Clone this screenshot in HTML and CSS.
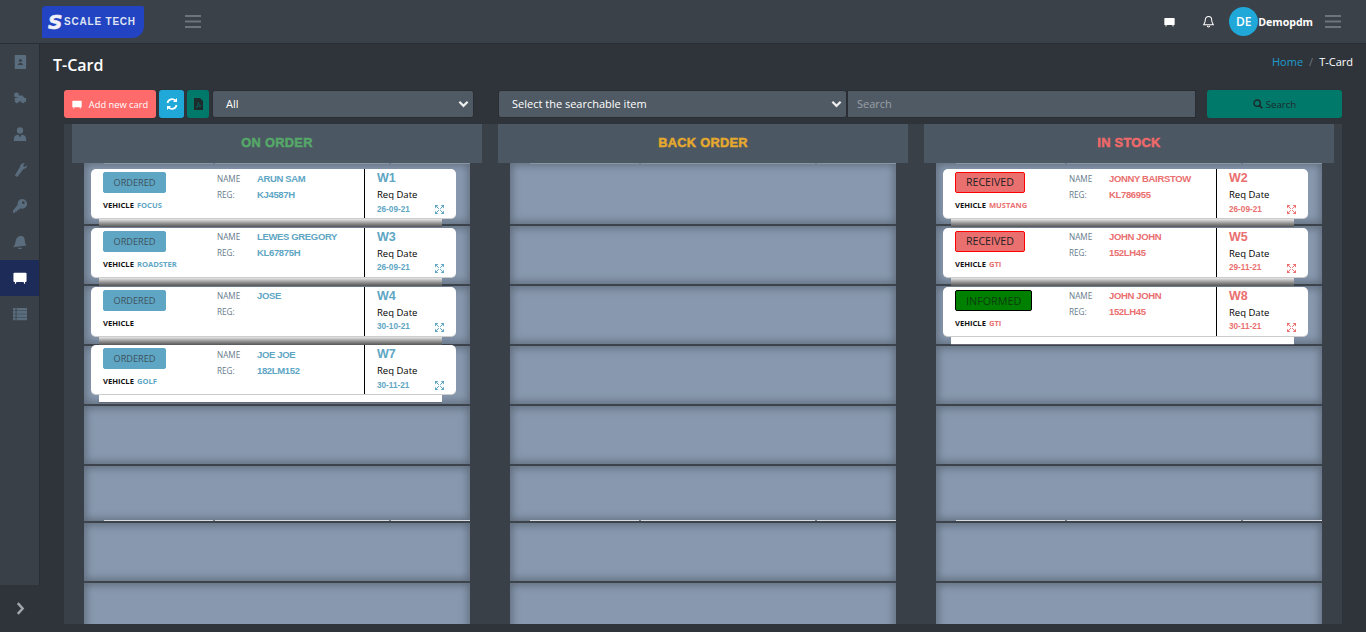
FILE: index.html
```html
<!DOCTYPE html>
<html>
<head>
<meta charset="utf-8">
<title>T-Card</title>
<link rel="stylesheet" href="styles.css">
</head>
<body>
<svg class="defs" width="0" height="0">
  <symbol id="i-board" viewBox="0 0 16 14"><path d="M1.500 1h13a1 1 0 0 1 1 1v8.500a1 1 0 0 1-1 1H13.600l.4 2h-1.400l-.4-2H3.800l-.4 2H2l.4-2H1.500a1 1 0 0 1-1-1V2a1 1 0 0 1 1-1z"/></symbol>
  <symbol id="i-expand" viewBox="0 0 12 12"><path d="M0 0h4.500L0 4.500zM12 0v4.500L7.500 0zM0 12V7.500L4.500 12zM12 12H7.500L12 7.500z"/><path d="M2 2l3.200 3.200M10 2L6.800 5.200M2 10l3.200-3.200M10 10L6.800 6.800" fill="none" stroke="currentColor" stroke-width="1.300"/></symbol>
  <symbol id="i-menu" viewBox="0 0 16 13"><path d="M0 0h16v2H0zM0 5.500h16v2H0zM0 11h16v2H0z"/></symbol>
  <symbol id="i-chev" viewBox="0 0 12 8"><path d="M1.500 1.500 6 6l4.500-4.500" fill="none" stroke="currentColor" stroke-width="2.400"/></symbol>
</svg>

<header class="topbar">
  <div class="logo"><span class="logo-s">S</span><span class="logo-text">SCALE TECH</span></div>
  <svg class="burger"><use href="#i-menu"/></svg>
  <div class="top-right">
    <svg class="top-board"><use href="#i-board"/></svg>
    <svg class="top-bell" viewBox="0 0 14 16"><path d="M7 1.500a4 4 0 0 1 4 4c0 3.500 1 5 2 6.500H1c1-1.500 2-3 2-6.500a4 4 0 0 1 4-4zM5.500 13.500a1.500 1.500 0 0 0 3 0" fill="none" stroke="#fff" stroke-width="1.300"/></svg>
    <span class="avatar">DE</span>
    <span class="user">Demopdm</span>
    <svg class="burger burger-right"><use href="#i-menu"/></svg>
  </div>
</header>

<div class="wrap">
  <nav class="sidebar">
    <a class="nav-item"><svg viewBox="0 0 14 16"><path d="M1 0h12a1 1 0 0 1 1 1v14a1 1 0 0 1-1 1H1zM7.500 4.500a1.800 1.800 0 1 0 0 3.600 1.800 1.800 0 0 0 0-3.600zM4.500 11.500h6c0-3-6-3-6 0z" fill-rule="evenodd"/></svg></a>
    <a class="nav-item"><svg viewBox="0 0 16 14"><circle cx="4" cy="3.500" r="2.800"/><path d="M5 4h6l2 3h2v4h-1.500a2 2 0 0 1-4 0H6.500a2 2 0 0 1-4 0H2V7h3z"/></svg></a>
    <a class="nav-item"><svg viewBox="0 0 16 16"><circle cx="8" cy="4" r="3.600"/><path d="M1 16v-2.500C1 10.500 3.500 8.800 6 8.600L8 12l2-3.400c2.500.2 5 1.900 5 4.900V16z"/></svg></a>
    <a class="nav-item"><svg viewBox="0 0 16 16"><path d="M13.500 0l-1.800 2.700.7 1.500 1.600.1L16 2.200c.4 2-.8 4.300-3.300 4.500l-.7.100-6.800 8.600c-.8.900-3.400-.7-2.800-1.800l5.500-9.100C7.800 2 10.800-.4 13.500 0z"/></svg></a>
    <a class="nav-item"><svg viewBox="0 0 16 16"><path d="M10.500 0a5.500 5.500 0 1 1-2 10.600L7 12.200H5v2H3L1.500 16H0v-3l5.400-6.400A5.500 5.500 0 0 1 10.500 0zm1.300 2.700a1.500 1.500 0 1 0 0 3 1.500 1.500 0 0 0 0-3z" fill-rule="evenodd"/></svg></a>
    <a class="nav-item"><svg viewBox="0 0 16 16"><path d="M9 1c3 0 4.500 2.300 4.500 5 0 3 .8 4.500 2 6L0 14c1.500-1.500 2.200-3 2.700-5.500C3.300 4 5.500 1 9 1zM6 14.500h4a2 2 0 0 1-4 .5z"/></svg></a>
    <a class="nav-item active"><svg viewBox="0 0 16 14"><use href="#i-board"/></svg></a>
    <a class="nav-item"><svg viewBox="0 0 16 14"><path d="M0 0h3v3H0zM4 0h12v3H4zM0 3.700h3v3H0zM4 3.700h12v3H4zM0 7.400h3v3H0zM4 7.400h12v3H4zM0 11h3v3H0zM4 11h12v3H4z"/></svg></a>
    <a class="nav-toggle"><svg viewBox="0 0 8 12"><path d="M1.500 1 6 6l-4.500 5" fill="none" stroke="currentColor" stroke-width="2.200"/></svg></a>
  </nav>

  <main class="main">
    <div class="page-head">
      <h1>T-Card</h1>
      <div class="crumbs"><a>Home</a><span class="sep">/</span><span>T-Card</span></div>
    </div>

    <div class="toolbar">
      <button class="btn btn-add"><svg><use href="#i-board"/></svg>Add new card</button>
      <button class="btn btn-sync"><svg viewBox="0 0 12 12"><path d="M1.500 5A4.600 4.600 0 0 1 9.400 2.600M10.500 7A4.600 4.600 0 0 1 2.600 9.400" fill="none" stroke="#fff" stroke-width="1.700"/><path d="M11 0v4H7zM1 12V8h4z" fill="#fff"/></svg></button>
      <button class="btn btn-pdf"><svg viewBox="0 0 9 12"><path d="M0 0h6l3 3v9H0z" fill="#1d2b2c"/><path d="M2 9.500c1.500-1 2.300-3 2.200-5 .3 2 1 3 2.800 3.500-1.500 0-3 .5-5 1.500z" fill="none" stroke="#00796b" stroke-width=".6"/></svg></button>
      <div class="select select-all"><span>All</span><svg><use href="#i-chev"/></svg></div>
      <div class="select select-item"><span>Select the searchable item</span><svg><use href="#i-chev"/></svg></div>
      <input class="search-input" type="text" placeholder="Search">
      <button class="btn btn-search"><svg viewBox="0 0 12 12"><circle cx="5" cy="5" r="3.800" fill="none" stroke="#1d2b2c" stroke-width="1.800"/><path d="M8 8l3.300 3.300" stroke="#1d2b2c" stroke-width="2"/></svg>Search</button>
    </div>

    <section class="board">
      <div class="column col-order">
        <h2 class="col-title">ON ORDER</h2>
        <div class="lane">
          <div class="rack">
            <div class="shelf shelf-first"><i></i><i></i><i></i></div><div class="shelf"></div><div class="shelf"></div><div class="shelf"></div><div class="shelf"></div>
            <div class="shelf shelf-short"><i></i><i></i><i></i></div><div class="shelf"></div><div class="shelf"></div>
          </div>
          <div class="cards blue">
            <div class="slot"><div class="card">
              <div class="c-left"><span class="status">ORDERED</span><div class="vehicle"><b>VEHICLE</b> FOCUS</div></div>
              <div class="c-mid"><div class="line"><label>NAME</label><strong>ARUN SAM</strong></div><div class="line"><label>REG:</label><strong>KJ4587H</strong></div></div>
              <div class="c-right"><div class="wk">W1</div><div class="req">Req Date</div><div class="dt">26-09-21</div><svg class="exp"><use href="#i-expand"/></svg></div>
            </div><div class="strip"></div></div>
            <div class="slot"><div class="card">
              <div class="c-left"><span class="status">ORDERED</span><div class="vehicle"><b>VEHICLE</b> ROADSTER</div></div>
              <div class="c-mid"><div class="line"><label>NAME</label><strong>LEWES GREGORY</strong></div><div class="line"><label>REG:</label><strong>KL67875H</strong></div></div>
              <div class="c-right"><div class="wk">W3</div><div class="req">Req Date</div><div class="dt">26-09-21</div><svg class="exp"><use href="#i-expand"/></svg></div>
            </div><div class="strip"></div></div>
            <div class="slot"><div class="card">
              <div class="c-left"><span class="status">ORDERED</span><div class="vehicle"><b>VEHICLE</b></div></div>
              <div class="c-mid"><div class="line"><label>NAME</label><strong>JOSE</strong></div><div class="line"><label>REG:</label><strong></strong></div></div>
              <div class="c-right"><div class="wk">W4</div><div class="req">Req Date</div><div class="dt">30-10-21</div><svg class="exp"><use href="#i-expand"/></svg></div>
            </div><div class="strip"></div></div>
            <div class="slot"><div class="card">
              <div class="c-left"><span class="status">ORDERED</span><div class="vehicle"><b>VEHICLE</b> GOLF</div></div>
              <div class="c-mid"><div class="line"><label>NAME</label><strong>JOE JOE</strong></div><div class="line"><label>REG:</label><strong>182LM152</strong></div></div>
              <div class="c-right"><div class="wk">W7</div><div class="req">Req Date</div><div class="dt">30-11-21</div><svg class="exp"><use href="#i-expand"/></svg></div>
            </div><div class="strip strip-last"></div></div>
          </div>
        </div>
      </div>

      <div class="column col-back">
        <h2 class="col-title">BACK ORDER</h2>
        <div class="lane">
          <div class="rack">
            <div class="shelf shelf-first"><i></i><i></i><i></i></div><div class="shelf"></div><div class="shelf"></div><div class="shelf"></div><div class="shelf"></div>
            <div class="shelf shelf-short"><i></i><i></i><i></i></div><div class="shelf"></div><div class="shelf"></div>
          </div>
        </div>
      </div>

      <div class="column col-stock">
        <h2 class="col-title">IN STOCK</h2>
        <div class="lane">
          <div class="rack">
            <div class="shelf shelf-first"><i></i><i></i><i></i></div><div class="shelf"></div><div class="shelf"></div><div class="shelf"></div><div class="shelf"></div>
            <div class="shelf shelf-short"><i></i><i></i><i></i></div><div class="shelf"></div><div class="shelf"></div>
          </div>
          <div class="cards red">
            <div class="slot"><div class="card">
              <div class="c-left"><span class="status received">RECEIVED</span><div class="vehicle"><b>VEHICLE</b> MUSTANG</div></div>
              <div class="c-mid"><div class="line"><label>NAME</label><strong>JONNY BAIRSTOW</strong></div><div class="line"><label>REG:</label><strong>KL786955</strong></div></div>
              <div class="c-right"><div class="wk">W2</div><div class="req">Req Date</div><div class="dt">26-09-21</div><svg class="exp"><use href="#i-expand"/></svg></div>
            </div><div class="strip"></div></div>
            <div class="slot"><div class="card">
              <div class="c-left"><span class="status received">RECEIVED</span><div class="vehicle"><b>VEHICLE</b> GTI</div></div>
              <div class="c-mid"><div class="line"><label>NAME</label><strong>JOHN JOHN</strong></div><div class="line"><label>REG:</label><strong>152LH45</strong></div></div>
              <div class="c-right"><div class="wk">W5</div><div class="req">Req Date</div><div class="dt">29-11-21</div><svg class="exp"><use href="#i-expand"/></svg></div>
            </div><div class="strip"></div></div>
            <div class="slot"><div class="card">
              <div class="c-left"><span class="status informed">INFORMED</span><div class="vehicle"><b>VEHICLE</b> GTI</div></div>
              <div class="c-mid"><div class="line"><label>NAME</label><strong>JOHN JOHN</strong></div><div class="line"><label>REG:</label><strong>152LH45</strong></div></div>
              <div class="c-right"><div class="wk">W8</div><div class="req">Req Date</div><div class="dt">30-11-21</div><svg class="exp"><use href="#i-expand"/></svg></div>
            </div><div class="strip strip-last"></div></div>
          </div>
        </div>
      </div>
    </section>
  </main>
</div>
</body>
</html>
```

FILE: styles.css
```css
* {
    box-sizing: border-box;
}
html, body {
    height: 100%;
    margin: 0;
    overflow: hidden;
}
body {
    display: flex;
    flex-direction: column;
    background: #2f343b;
    color: #fff;
    font-family: "Open Sans", "Noto Sans", sans-serif;
    font-size: 11px;
}
.defs {
    position: absolute;
}
svg {
    display: block;
    fill: currentColor;
}

/* top bar */
.topbar {
    display: flex;
    align-items: center;
    flex: 0 0 44px;
    padding: 0 25px 0 42px;
    background: #3b4148;
    border-bottom: 1px solid #2a2e34;
}
.logo {
    display: flex;
    align-items: center;
    width: 102px;
    height: 32px;
    padding-left: 6px;
    background: #2244c2;
    border-radius: 4px 2px 12px 0;
}
.logo-s {
    flex: 0 0 16px;
    font: italic bold 20px "DejaVu Sans", sans-serif;
    -webkit-text-stroke: .6px #f0f0f8;
    color: #f0f0f8;
}
.logo-text {
    font: bold 10px "Liberation Sans", sans-serif;
    letter-spacing: .8px;
    color: #dfe4f2;
    white-space: nowrap;
}
.burger {
    width: 16px;
    height: 13px;
    margin-left: 41px;
    color: #6c747d;
}
.top-right {
    display: flex;
    align-items: center;
    margin-left: auto;
}
.top-board {
    width: 11px;
    height: 10px;
    color: #fff;
}
.top-bell {
    width: 11px;
    height: 13px;
    margin-left: 28px;
    fill: none;
}
.avatar {
    display: flex;
    align-items: center;
    justify-content: center;
    width: 29px;
    height: 29px;
    margin-left: 15px;
    border-radius: 50%;
    background: #1fa8d8;
    font-size: 12px;
    font-weight: 600;
}
.user {
    font-size: 10.600px;
    font-weight: 700;
}
.burger-right {
    margin-left: 12px;
}

/* side nav */
.wrap {
    display: flex;
    flex: 1;
    min-height: 0;
}
.sidebar {
    display: flex;
    flex-direction: column;
    flex: 0 0 40px;
    background: #3a4047;
    border-right: 1px solid #2a2e34;
}
.nav-item {
    display: flex;
    align-items: center;
    justify-content: center;
    height: 36px;
    color: #5a6d7f;
}
.nav-item svg {
    width: 14px;
    height: 14px;
}
.nav-item.active {
    background: #1d2b58;
    color: #fff;
}
.nav-toggle {
    display: flex;
    align-items: center;
    justify-content: center;
    height: 47px;
    margin-top: auto;
    margin-right: -1px;
    background: #2f343b;
    color: #a2a8ae;
}
.nav-toggle svg {
    width: 9px;
    height: 13px;
}

/* content */
.main {
    flex: 1;
    min-width: 0;
    padding: 0 13px;
}
.page-head {
    display: flex;
    justify-content: space-between;
    align-items: flex-start;
    height: 46px;
}
h1 {
    margin: 10px 0 0;
    font-size: 16px;
    line-height: 22px;
    font-weight: 600;
}
.crumbs {
    display: flex;
    gap: 6px;
    margin-top: 10px;
    font-size: 11px;
    line-height: 16px;
}
.crumbs a {
    color: #1f9ccc;
}
.crumbs .sep {
    color: #6c757d;
}
.toolbar {
    display: flex;
    margin: 0 11px;
    height: 28px;
}
.btn {
    display: flex;
    align-items: center;
    justify-content: center;
    height: 28px;
    padding: 0;
    border: 0;
    border-radius: 3px;
    font: inherit;
    color: #fff;
}
.btn-add {
    width: 92px;
    background: #ff6b6b;
    font-size: 9.300px;
    font-weight: 500;
}
.btn-add svg {
    width: 10px;
    height: 9px;
    margin-right: 7px;
}
.btn-sync {
    width: 25px;
    margin-left: 3px;
    background: #1fa8d8;
}
.btn-sync svg {
    width: 12px;
    height: 12px;
}
.btn-pdf {
    width: 22px;
    margin-left: 3px;
    background: #00796b;
}
.btn-pdf svg {
    width: 9px;
    height: 12px;
}
.select {
    display: flex;
    align-items: center;
    justify-content: space-between;
    padding: 0 4px 1px 13px;
    background: #505a64;
    border: 1px solid #2a2e34;
    border-radius: 3px;
}
.select svg {
    width: 11px;
    height: 8px;
    color: #eee;
}
.select-all {
    width: 262px;
    margin-left: 3px;
}
.select-item {
    width: 349px;
    margin-left: 24px;
}
.search-input {
    width: 349px;
    padding: 0 9px 2px;
    background: #505a64;
    border: 1px solid #2a2e34;
    color: #fff;
    font: inherit;
}
.search-input::placeholder {
    color: #9aa1a8;
}
.btn-search {
    width: 135px;
    margin-left: 11px;
    background: #00796b;
    color: #1d2b2c;
    font-size: 9.600px;
}
.btn-search svg {
    width: 10px;
    height: 10px;
    margin-right: 3px;
}

/* board */
.board {
    display: flex;
    gap: 16px;
    height: 500px;
    margin: 6px 11px 0;
    padding: 0 8px;
    background: #3a4047;
    overflow: hidden;
}
.column {
    display: flex;
    flex-direction: column;
    width: 410px;
}
.col-title {
    flex: 0 0 39px;
    margin: 0;
    background: #4b5763;
    text-align: center;
    font: bold 12.800px/37px "Liberation Sans", sans-serif;
    -webkit-text-stroke: .5px currentColor;
    letter-spacing: .3px;
}
.col-order .col-title { color: #55a868; }
.col-back .col-title { color: #e5a92e; }
.col-stock .col-title { color: #ee6a6a; }

.lane {
    position: relative;
    flex: 1;
    margin: 0 12px;
}
.rack {
    display: flex;
    flex-direction: column;
}
.shelf {
    position: relative;
    flex: 0 0 60px;
    background: #8899af;
    box-shadow: inset 0 0 8px 2px #5f6b7b;
    border-bottom: 2px solid #3c434b;
}
.shelf-first {
    flex-basis: 63px;
}
.shelf-short {
    flex-basis: 57px;
}
.shelf i {
    position: absolute;
    height: 1px;
    background: #d8dde3;
}
.shelf-first i {
    top: 0;
    background: #8a95a2;
}
.shelf-short i {
    bottom: 0;
}
.shelf i:nth-child(1) { left: 20px; width: 109px; }
.shelf i:nth-child(2) { left: 131px; width: 174px; }
.shelf i:nth-child(3) { left: 307px; right: 0; }

/* cards */
.cards {
    position: absolute;
    top: 6px;
    left: 7px;
    width: 365px;
}
.slot {
    height: 58.800px;
}
.card {
    display: flex;
    height: 50px;
    background: #fff;
    border-bottom: 1px solid #ccc;
    border-radius: 5px;
    color: #000;
}
.strip {
    height: 8px;
    margin: 0 14px 0 8px;
    background: linear-gradient(#e8e8e8, #8a8a8a 60%, #555);
}
.strip-last {
    background: #fff;
    border-bottom: 1px solid #667;
}
.c-left {
    flex: 0 0 126px;
    padding: 3px 0 0 12px;
}
.status {
    display: inline-block;
    height: 21px;
    padding: 0 9.500px;
    border: 1px solid #5ea6c4;
    border-radius: 2px;
    background: #5ea6c4;
    color: #40515b;
    font-size: 9.200px;
    line-height: 19px;
}
.status.received {
    padding: 0 10px;
    background: #ea7070;
    border-color: #f00;
    color: #222;
    font-size: 10.600px;
}
.status.informed {
    padding: 0 10px;
    background: #008000;
    border-color: #000;
    color: #0b3d0b;
    font-size: 10.800px;
}
.vehicle {
    margin-top: 7px;
    font-size: 7.600px;
    font-weight: 700;
}
.vehicle b {
    margin-right: 1px;
    color: #111;
    font-weight: 700;
}
.blue .vehicle, .blue strong, .blue .wk, .blue .dt, .blue .exp { color: #5ea6c4; }
.red .vehicle, .red strong, .red .wk, .red .dt, .red .exp { color: #ea7070; }
.c-mid {
    flex: 0 0 148px;
    padding-top: 1px;
    border-right: 1px solid #000;
}
.line {
    display: flex;
    align-items: center;
    height: 16px;
}
.line label {
    flex: 0 0 40px;
    color: #667a8a;
    font-size: 8.200px;
}
.line strong {
    font: bold 9.500px "Liberation Sans", sans-serif;
    letter-spacing: -.35px;
}
.c-right {
    position: relative;
    flex: 1;
    padding-left: 12px;
    line-height: 1;
}
.wk {
    margin-top: 2px;
    font: bold 12.500px "Liberation Sans", sans-serif;
}
.req {
    margin-top: 5px;
    font-size: 9.500px;
}
.dt {
    margin-top: 5px;
    font: bold 8.200px "Liberation Sans", sans-serif;
}
.exp {
    position: absolute;
    right: 12px;
    bottom: 4px;
    width: 9px;
    height: 9px;
}
```
